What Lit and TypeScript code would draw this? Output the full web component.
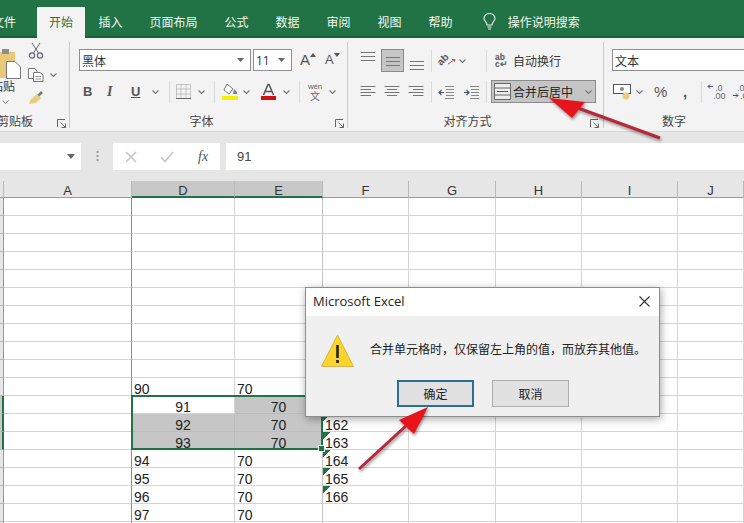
import { LitElement, html, css, svg } from "lit";
import { customElement } from "lit/decorators.js";

const chev = html`<svg class="ic" width="7" height="4" viewBox="0 0 7 4"><path d="M.5.5 3.5 3.5 6.5.5" fill="none" stroke="#777" stroke-width="1.1"/></svg>`;
const launcher = html`<svg class="ic" width="9" height="9" viewBox="0 0 9 9"><path d="M.5 8V.5H8M8.500 8.500 3.500 3.500M8.500 4.500V8.500H4.500" fill="none" stroke="#666" stroke-width="1"/></svg>`;
const vLines = (off: number) => html`<svg class="ic" width="16" height="20" viewBox="0 0 16 20">${[0, 4, 8].map((d) => svg`<path d="M1 ${off + d + .5}H15" stroke="#777" stroke-width="1"/>`)}</svg>`;
const indentIcon = (dir: number) => html`<svg class="ic" width="17" height="14" viewBox="0 0 17 14"><path d="M7 1.500H16M8 4.500H16M8 7.500H16M8 10.500H16M7 13.500H16" stroke="#888"/><path d=${dir < 0 ? "M6 7.500H1M3.500 5 1 7.500 3.500 10" : "M1 7.500H6M3.500 5 6 7.500 3.500 10"} fill="none" stroke="#44546a" stroke-width="1.200"/></svg>`;

type Row = { d?: string; e?: string; f?: string; mid?: boolean; gd?: boolean; ge?: boolean; sel?: boolean };
const rows: Row[] = [
  ...Array.from({ length: 10 }, () => ({})),
  { d: "90", e: "70" },
  { d: "91", e: "70", f: "161", mid: true, ge: true, sel: true },
  { d: "92", e: "70", f: "162", mid: true, gd: true, ge: true, sel: true },
  { d: "93", e: "70", f: "163", mid: true, gd: true, ge: true, sel: true },
  { d: "94", e: "70", f: "164" },
  { d: "95", e: "70", f: "165" },
  { d: "96", e: "70", f: "166" },
  { d: "97", e: "70" },
  {},
];

@customElement("app-root")
export class AppRoot extends LitElement {
  static styles = css`
    :host { display: block; position: relative; width: 744px; height: 523px; overflow: hidden; background: #fff;
      font-family: "Noto Sans CJK SC", "Liberation Sans", sans-serif; font-size: 12px; color: #333; }
    .ic { display: block; }
    .tabs { height: 38px; box-sizing: border-box; background: #217346; border-bottom: 2px solid #1b5e3a; display: flex; align-items: flex-end; color: #f2f7f4; }
    .tab { height: 28px; line-height: 27px; padding: 0 13.500px; white-space: nowrap; flex: none; }
    .tab.file { margin-left: -21px; padding: 0 21px 0 13px; }
    .tab.on { background: #f3f3f3; color: #217346; height: 30px; margin-bottom: -2px; padding: 1px 12px 0; width: 24px; }
    .tab.tell { padding: 0 0 0 12px; }
    .bulb { margin: 0 0 6px 16.500px; flex: none; }
    .ribbon { height: 94px; background: #f3f3f3; display: flex; border-bottom: 1px solid #d6d6d6; box-sizing: border-box; }
    .group { position: relative; box-sizing: border-box; border-right: 1px solid #c8c8c8; margin: 4px 0 3px; display: flex; flex-direction: column; flex: none; }
    .clip { width: 70px; }
    .font { width: 278px; padding-left: 9px; }
    .align { width: 256px; padding-left: 12px; }
    .num { width: 140px; border-right: 0; padding-left: 8px; }
    .row1 { height: 23px; margin-top: 7px; display: flex; }
    .row2 { height: 23px; margin-top: 8px; display: grid; align-items: center; justify-items: start; }
    .label { position: absolute; left: 0; right: 0; bottom: -1px; text-align: center; line-height: 16px; color: #444; }
    .font .label { right: 14px; }
    .align .label { right: 16px; }
    .launch { position: absolute; right: 3px; bottom: 0; }
    .align .launch { right: 4px; }
    .sep { width: 1px; height: 22px; background: #dcdcdc; }
    .select { box-sizing: border-box; height: 22px; background: #fff; border: 1px solid #8f8f8f; display: flex; align-items: center; justify-content: space-between; padding: 0 6px 0 2px; color: #333; flex: none; }
    .fname { width: 172px; }
    .fsize { width: 39px; margin-left: 2px; font-family: "Open Sans", sans-serif; }
    .numsel { width: 140px; }
    .big-a { margin-left: 8px; width: 17px; display: flex; align-items: flex-start; font-size: 15px; line-height: 22px; color: #555; font-family: "Liberation Sans", sans-serif; }
    .big-a svg { margin-top: 4px; }
    .small-a { font-size: 13px; }
    .fmt { font: bold 13px "Liberation Sans", sans-serif; color: #555; width: 12px; }
    .it { font-style: italic; font-family: "Liberation Serif", serif; font-size: 14px; }
    .un { text-decoration: underline; font-weight: bold; }
    .wen { display: flex; flex-direction: column; align-items: center; width: 16px; line-height: 10px; font-size: 10px; color: #666; }
    .wen b { font: 8px "Liberation Sans", sans-serif; letter-spacing: -.2px; }
    .paste { margin-top: 6px; height: 60px; }
    .paste-txt { margin: -1px 0 0 -9px; line-height: 14px; color: #333; white-space: nowrap; }
    .paste-chev { margin: 7px 0 0 2px; }
    .clipcol { display: grid; grid-template-columns: 22px 1fr; height: 84px; }
    .cliptools { display: flex; flex-direction: column; gap: 9px; padding: 1px 0 0 6px; }
    .cliptools div { display: flex; align-items: center; gap: 6px; }
    .clabel { left: -3px; right: auto; white-space: nowrap; }
    .a1 { display: grid; grid-template-columns: 21px 28px 22px 7px 21px 27px 9px 18px 1fr; justify-items: start; align-items: center; }
    .active { box-sizing: border-box; width: 23px; height: 23px; background: #c5c5c5; border: 1px solid #8a8a8a; display: flex; align-items: center; justify-content: center; }
    .ab { display: flex; flex-direction: column; font: 8.500px/7px "Liberation Sans", sans-serif; color: #555; width: 14px; font-weight: bold; }
    .merge { box-sizing: border-box; width: 105px; height: 23px; background: #c5c5c5; border: 1px solid #8a8a8a; display: flex; align-items: center; padding-left: 2px; gap: 2px; color: #222; white-space: nowrap; }
    .merge .c { margin-left: 10px; }
    .mergegrid { grid-template-columns: 24px 24px 23px 7px 25px 23px 5px 1fr; }
    .fontgrid { grid-template-columns: 24px 24px 21px 17px 7px 22px 16px 8px 21px 17px 23px 16px 8px 22px auto; padding-left: 4px; }
    .numgrid { grid-template-columns: 23px 18px 29px 18px 6px 25px auto; padding-left: 1px; }
    .pct { font: 15px "Liberation Sans", sans-serif; color: #555; }
    .comma { font: bold 15px "Liberation Sans", sans-serif; color: #555; line-height: 10px; }
    .formula { height: 49px; box-sizing: border-box; background: #e6e6e6; padding: 11px 0; display: flex; }
    .name { width: 81px; background: #fff; display: flex; align-items: center; justify-content: flex-end; padding-right: 6px; box-sizing: border-box; }
    .grip { width: 32px; display: flex; justify-content: center; align-items: center; }
    .fbtns { width: 107px; background: #fff; display: flex; align-items: center; padding-left: 12px; box-sizing: border-box; gap: 23px; }
    .fx { font: italic 14px "Liberation Serif", serif; color: #555; margin-left: 1px; }
    .input { flex: 1; background: #fff; margin-left: 6px; padding-left: 11px; font: 13px/27px "Liberation Sans", sans-serif; color: #444; }
    .sheet { display: grid; grid-template-columns: 4px 128px 103px 88px 86px 87px 86px 96px 1fr; position: relative; font: 14px/18px "Liberation Sans", sans-serif; color: #222; }
    .ch { box-sizing: border-box; height: 17px; background: #e6e6e6; border-right: 1px solid #b9b9b9; border-bottom: 1px solid #9c9c9c; text-align: center; font-size: 13px; line-height: 19px; color: #333; }
    .ch.s { background: #c8c8c8; border-bottom: 2px solid #217346; }
    .rh { box-sizing: border-box; height: 18px; background: #e6e6e6; border-right: 1px solid #9a9a9a; border-bottom: 1px solid #b9b9b9; }
    .rh.s { background: #c8c8c8; border-right: 2px solid #217346; }
    .cell { box-sizing: border-box; height: 18px; border-right: 1px solid #d4d4d4; border-bottom: 1px solid #d4d4d4; padding: 2px 0 0 2px; overflow: hidden; white-space: nowrap; }
    .cell.a { border-right-color: #8c8c8c; }
    .cell.e { border-right-color: #c4c4c4; }
    .cell.mid { text-align: center; padding-left: 0; }
    .cell.g { background: #c6c6c6; border-bottom-color: #bcbcbc; border-right-color: #bcbcbc; }
    .cell.warn { background: linear-gradient(135deg, #217346 0 5px, transparent 5px); padding-left: 2px; }
    .selbox { position: absolute; left: 131px; top: 214px; width: 192px; height: 55px; box-sizing: border-box; border: 2px solid #217346; pointer-events: none; }
    .handle { position: absolute; right: -4px; bottom: -4px; width: 5px; height: 5px; background: #217346; border: 1px solid #fff; }
    .dialog { position: absolute; left: 305px; top: 287px; width: 355px; height: 130px; box-sizing: border-box; background: #f0f0f0; border: 1px solid #8d8d8d; box-shadow: 1px 2px 8px rgba(0, 0, 0, .35); display: flex; flex-direction: column; }
    .dtitle { height: 26px; padding: 0 9px 2px 7px; background: #fff; display: flex; align-items: center; justify-content: space-between; font: 13px "Open Sans", sans-serif; color: #222; flex: none; }
    .dbody { display: flex; align-items: center; padding: 18px 0 0 15px; gap: 17px; color: #222; }
    .dbody span { margin: -5px 0 0 -1px; }
    .dbtns { display: flex; gap: 18px; padding: 13px 0 0 91px; }
    .btn { box-sizing: border-box; width: 77px; height: 27px; border: 1px solid #adadad; background: #e1e1e1; display: flex; align-items: center; justify-content: center; color: #222; }
    .btn.def { border: 2px solid #2b6f96; }
    .arrows { position: absolute; left: 0; top: 0; pointer-events: none; filter: drop-shadow(1px 2px 1.500px rgba(0, 0, 0, .4)); }
  `;

  render() {
    return html`
      <div class="tabs">
        <div class="tab file">文件</div><div class="tab on">开始</div><div class="tab">插入</div><div class="tab">页面布局</div>
        <div class="tab">公式</div><div class="tab">数据</div><div class="tab">审阅</div><div class="tab">视图</div><div class="tab">帮助</div>
        <svg class="ic bulb" width="13" height="17" viewBox="0 0 13 17"><path d="M4 12C4 9 1 8 1 5.500A5.500 5 0 0 1 12 5.500C12 8 9 9 9 12ZM4.500 14H8.500M5 16H8" fill="none" stroke="#e8f1ec" stroke-width="1.100"/></svg>
        <div class="tab tell">操作说明搜索</div>
      </div>
      <div class="ribbon">
        <div class="group clip">
          <div class="clipcol">
            <div class="paste">
              <svg class="ic" width="22" height="32" viewBox="0 0 22 32"><rect x="-6" y="4" width="21" height="26" fill="#e9c877"/><rect x="2" y="1" width="7" height="5" fill="#8d8d8d"/><path d="M6.500 13.500H15L20.500 19V30.500H6.500Z" fill="#fff" stroke="#777"/></svg>
              <div class="paste-txt">粘贴</div>
              <svg class="ic paste-chev" width="7" height="4" viewBox="0 0 7 4"><path d="M.5.5 3.500 3.500 6.500.5" fill="none" stroke="#777"/></svg>
            </div>
            <div class="cliptools">
              <div><svg class="ic" width="16" height="16" viewBox="0 0 16 16"><path d="M4 0 10.500 10M12 0 5.500 10" stroke="#667" fill="none"/><circle cx="4" cy="12.500" r="2.600" fill="none" stroke="#667" stroke-width="1.200"/><circle cx="12" cy="12.500" r="2.600" fill="none" stroke="#667" stroke-width="1.200"/></svg></div>
              <div><svg class="ic" width="16" height="14" viewBox="0 0 16 14"><path d="M.5.5H7L9 3V10.500H.5Z" fill="#fff" stroke="#777"/><path d="M5.500 4.500H12L15 7V13.500H5.500Z" fill="#fff" stroke="#777"/><path d="M7.500 8.500H13M7.500 11H13" stroke="#999"/></svg>${chev}</div>
              <div><svg class="ic" width="16" height="14" viewBox="0 0 16 14"><path d="M14 1 9 6" stroke="#777" stroke-width="2.500"/><path d="M9 3 13 7 8 12 1 13 3 8Z" fill="#e9cc84"/></svg></div>
            </div>
          </div>
          <div class="label clabel">剪贴板</div>
          <div class="launch">${launcher}</div>
        </div>
        <div class="group font">
          <div class="row1">
            <div class="select fname"><span>黑体</span><svg width="7" height="4" viewBox="0 0 7 4"><path d="M0 0H7L3.500 4Z" fill="#666"/></svg></div>
            <div class="select fsize"><span>11</span><svg width="7" height="4" viewBox="0 0 7 4"><path d="M0 0H7L3.500 4Z" fill="#666"/></svg></div>
            <div class="big-a">A<svg width="6" height="4" viewBox="0 0 6 4"><path d="M0 4 3 0 6 4Z" fill="#555"/></svg></div>
            <div class="big-a small-a">A<svg width="6" height="4" viewBox="0 0 6 4"><path d="M0 0H6L3 4Z" fill="#555"/></svg></div>
          </div>
          <div class="row2 fontgrid">
            <span class="fmt">B</span><span class="fmt it">I</span><span class="fmt un">U</span>${chev}<span class="sep"></span>
            <svg class="ic" width="15" height="15" viewBox="0 0 15 15"><path d="M.5.5H14.500V14.500H.5ZM.5 5H14.500M.5 10H14.500M5 .5V14.500M10 .5V14.500" fill="none" stroke="#999" stroke-dasharray="1 1"/><path d="M0 14.500H15" stroke="#666"/></svg>${chev}<span class="sep"></span>
            <svg class="ic" width="18" height="18" viewBox="0 0 18 18"><path d="M5 1 11 6 7 11 2 7Z" fill="#fff" stroke="#777"/><path d="M12 6 15 9V11H11Z" fill="#7b7fc0"/><rect x="0" y="13" width="16" height="4" fill="#f5f000"/></svg>${chev}
            <svg class="ic" width="17" height="18" viewBox="0 0 17 18"><path d="M3.500 12 8 1.500H9L13.500 12M5.500 8.500H11.500" fill="none" stroke="#555" stroke-width="1.500"/><rect x="1" y="13" width="15" height="4" fill="#d40f0f"/></svg>${chev}<span class="sep"></span>
            <div class="wen"><b>wén</b><span>文</span></div>${chev}
          </div>
          <div class="label">字体</div>
          <div class="launch">${launcher}</div>
        </div>
        <div class="group align">
          <div class="row1 a1">
            <div>${vLines(1)}</div>
            <div class="active">${vLines(6)}</div>
            <div>${vLines(10)}</div>
            <span class="sep"></span>
            <svg class="ic" width="18" height="17" viewBox="0 0 18 17"><text transform="translate(3 14) rotate(-45)" font-size="10" font-weight="bold" font-family="Liberation Sans" fill="#555">ab</text><path d="M10 12 16 8M14 7.500 17 7.500 16 10" fill="none" stroke="#c05050"/></svg>
            ${chev}
            <span class="sep"></span>
            <div class="ab"><span>ab</span><span>c↵</span></div>
            <span>自动换行</span>
          </div>
          <div class="row2 mergegrid">
            <svg class="ic" width="16" height="14" viewBox="0 0 16 14"><path d="M.5 1.500H15.500M.5 4.500H11M.5 7.500H15.500M.5 10.500H11" stroke="#777"/></svg>
            <svg class="ic" width="16" height="14" viewBox="0 0 16 14"><path d="M.5 1.500H15.500M3 4.500H13M.5 7.500H15.500M3 10.500H13" stroke="#777"/></svg>
            <svg class="ic" width="16" height="14" viewBox="0 0 16 14"><path d="M.5 1.500H15.500M5 4.500H15.500M.5 7.500H15.500M5 10.500H15.500" stroke="#777"/></svg>
            <span class="sep"></span>
            ${indentIcon(-1)}${indentIcon(1)}
            <span class="sep"></span>
            <div class="merge">
              <svg class="ic" width="17" height="17" viewBox="0 0 17 17"><path d="M.5.5H16.500V16.500H.5ZM.5 5H16.500M.5 12H16.500" fill="#eee" stroke="#666"/><path d="M3 8.500H14" stroke="#556"/></svg>
              <span>合并后居中</span><span class="c">${chev}</span>
            </div>
          </div>
          <div class="label">对齐方式</div>
          <div class="launch">${launcher}</div>
        </div>
        <div class="group num">
          <div class="row1"><div class="select numsel"><span>文本</span></div></div>
          <div class="row2 numgrid">
            <svg class="ic" width="19" height="16" viewBox="0 0 19 16"><rect x=".5" y=".5" width="17" height="9" fill="#fff" stroke="#555"/><circle cx="9" cy="5" r="2" fill="#888"/><circle cx="13" cy="12" r="3.500" fill="#e9cc84"/></svg>${chev}
            <span class="pct">%</span><span class="comma">,</span><span class="sep"></span>
            <svg class="ic" width="19" height="17" viewBox="0 0 19 17"><path d="M6 3.500H1M3 1.500 1 3.500 3 5.500" fill="none" stroke="#44546a"/><text x="8" y="8" font-size="9" font-family="Liberation Sans" fill="#666">.0</text><text x="6" y="16" font-size="9" font-family="Liberation Sans" fill="#666">.00</text></svg>
            <svg class="ic" width="19" height="17" viewBox="0 0 19 17"><text x="5" y="8" font-size="9" font-family="Liberation Sans" fill="#666">.00</text><path d="M1 12.500H6M4 10.500 6 12.500 4 14.500" fill="none" stroke="#44546a"/><text x="8" y="16" font-size="9" font-family="Liberation Sans" fill="#666">.0</text></svg>
          </div>
          <div class="label">数字</div>
        </div>
      </div>
      <div class="formula">
        <div class="name"><svg width="8" height="5" viewBox="0 0 8 5"><path d="M0 0H8L4 5Z" fill="#666"/></svg></div>
        <div class="grip"><svg width="3" height="14" viewBox="0 0 3 14"><path d="M1.500 1V13" stroke="#999" stroke-width="2" stroke-dasharray="2 2"/></svg></div>
        <div class="fbtns">
          <svg class="ic" width="12" height="12" viewBox="0 0 12 12"><path d="M1 1 11 11M11 1 1 11" stroke="#c4c4c4" stroke-width="1.500"/></svg>
          <svg class="ic" width="14" height="12" viewBox="0 0 14 12"><path d="M1 6 5 10.500 13 1" fill="none" stroke="#c4c4c4" stroke-width="1.500"/></svg>
          <span class="fx">fx</span>
        </div>
        <div class="input">91</div>
      </div>
      <div class="sheet">
        <div class="ch"></div><div class="ch">A</div><div class="ch s">D</div><div class="ch s">E</div>
        <div class="ch">F</div><div class="ch">G</div><div class="ch">H</div><div class="ch">I</div><div class="ch">J</div>
        ${rows.map((r) => html`
          <div class="rh ${r.sel ? "s" : ""}"></div>
          <div class="cell a"></div>
          <div class="cell ${r.mid ? "mid" : ""} ${r.gd ? "g" : ""}">${r.d ?? ""}</div>
          <div class="cell e ${r.mid ? "mid" : ""} ${r.ge ? "g" : ""}">${r.e ?? ""}</div>
          <div class="cell ${r.f ? "warn" : ""}">${r.f ?? ""}</div>
          <div class="cell"></div><div class="cell"></div><div class="cell"></div><div class="cell"></div>
        `)}
        <div class="selbox"><div class="handle"></div></div>
      </div>
      <div class="dialog">
        <div class="dtitle"><span>Microsoft Excel</span>
          <svg class="ic" width="11" height="11" viewBox="0 0 11 11"><path d="M.5.5 10.500 10.500M10.500.5 .5 10.500" stroke="#333" stroke-width="1.100"/></svg></div>
        <div class="dbody">
          <svg class="ic" width="33" height="33" viewBox="0 0 33 33"><path d="M16.500 1 32.500 32.500H.5Z" fill="#fbd32b" stroke="#d9b54a"/><rect x="15.200" y="11" width="2.600" height="13" fill="#222"/><rect x="15.200" y="26" width="2.600" height="3" fill="#222"/></svg>
          <span>合并单元格时，仅保留左上角的值，而放弃其他值。</span>
        </div>
        <div class="dbtns"><div class="btn def">确定</div><div class="btn">取消</div></div>
      </div>
      <svg class="arrows" width="744" height="523" viewBox="0 0 744 523">
        <path d="M660 138 578 108" stroke="#b4283a" stroke-width="3" fill="none"/>
        <path d="M549 98 585 102 572 118Z" fill="#e8141c"/>
        <path d="M359 469 408 424" stroke="#b4283a" stroke-width="3" fill="none"/>
        <path d="M428 407 399 420 414 434Z" fill="#e8141c"/>
      </svg>
    `;
  }
}
